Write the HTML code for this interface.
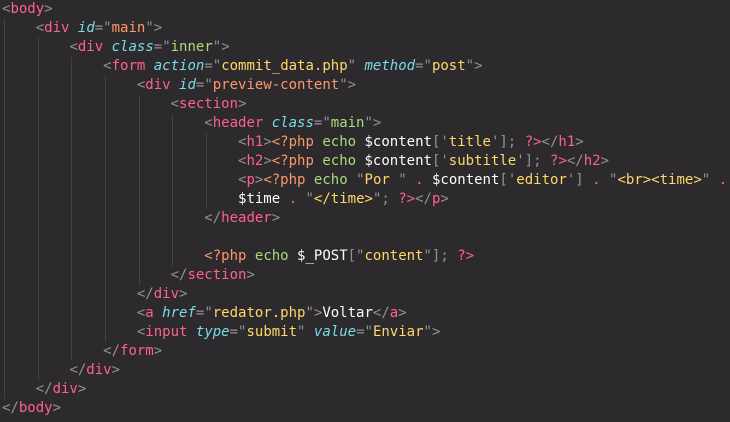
<!DOCTYPE html>
<html><head><meta charset="utf-8"><style>
html,body{margin:0;padding:0}
body{width:730px;height:422px;background:#2d2a2e;overflow:hidden;position:relative;font-family:"DejaVu Sans Mono","Liberation Mono",monospace;font-size:14px;color:#fcfcfa}
pre{margin:0;font:inherit;line-height:19px;position:absolute;top:0;left:2px;white-space:pre}
.g{position:absolute;width:1px;background:#454246}
.b{color:#939293}.t{color:#ff6188}.a{color:#78dce8;font-style:italic}
.o{color:#fc9867}.gr{color:#a9dc76}.y{color:#ffd866}.w{color:#fcfcfa}
</style></head><body>
<div class="g" style="left:4px;top:19px;height:380px"></div>
<div class="g" style="left:38px;top:38px;height:342px"></div>
<div class="g" style="left:71px;top:57px;height:304px"></div>
<div class="g" style="left:105px;top:76px;height:266px"></div>
<div class="g" style="left:139px;top:95px;height:190px"></div>
<div class="g" style="left:172px;top:114px;height:152px"></div>
<div class="g" style="left:206px;top:133px;height:76px"></div>
<pre><span class="b">&lt;</span><span class="t">body</span><span class="b">&gt;</span>
    <span class="b">&lt;</span><span class="t">div</span> <span class="a">id</span><span class="b">="</span><span class="o">main</span><span class="b">"&gt;</span>
        <span class="b">&lt;</span><span class="t">div</span> <span class="a">class</span><span class="b">="</span><span class="gr">inner</span><span class="b">"&gt;</span>
            <span class="b">&lt;</span><span class="t">form</span> <span class="a">action</span><span class="b">="</span><span class="y">commit_data.php</span><span class="b">"</span> <span class="a">method</span><span class="b">="</span><span class="y">post</span><span class="b">"&gt;</span>
                <span class="b">&lt;</span><span class="t">div</span> <span class="a">id</span><span class="b">="</span><span class="o">preview-content</span><span class="b">"&gt;</span>
                    <span class="b">&lt;</span><span class="t">section</span><span class="b">&gt;</span>
                        <span class="b">&lt;</span><span class="t">header</span> <span class="a">class</span><span class="b">="</span><span class="gr">main</span><span class="b">"&gt;</span>
                            <span class="b">&lt;</span><span class="t">h1</span><span class="b">&gt;</span><span class="o">&lt;?php</span> <span class="gr">echo</span> <span class="w">$content</span><span class="b">['</span><span class="y">title</span><span class="b">'];</span> <span class="t">?&gt;</span><span class="b">&lt;/</span><span class="t">h1</span><span class="b">&gt;</span>
                            <span class="b">&lt;</span><span class="t">h2</span><span class="b">&gt;</span><span class="o">&lt;?php</span> <span class="gr">echo</span> <span class="w">$content</span><span class="b">['</span><span class="y">subtitle</span><span class="b">'];</span> <span class="t">?&gt;</span><span class="b">&lt;/</span><span class="t">h2</span><span class="b">&gt;</span>
                            <span class="b">&lt;</span><span class="t">p</span><span class="b">&gt;</span><span class="o">&lt;?php</span> <span class="gr">echo</span> <span class="b">"</span><span class="y">Por </span><span class="b">"</span> <span class="t">.</span> <span class="w">$content</span><span class="b">['</span><span class="y">editor</span><span class="b">']</span> <span class="t">.</span> <span class="b">"</span><span class="y">&lt;br&gt;&lt;time&gt;</span><span class="b">"</span> <span class="t">.</span>
                            <span class="w">$time</span> <span class="t">.</span> <span class="b">"</span><span class="y">&lt;/time&gt;</span><span class="b">";</span> <span class="t">?&gt;</span><span class="b">&lt;/</span><span class="t">p</span><span class="b">&gt;</span>
                        <span class="b">&lt;/</span><span class="t">header</span><span class="b">&gt;</span>

                        <span class="o">&lt;?php</span> <span class="gr">echo</span> <span class="w">$_POST</span><span class="b">["</span><span class="y">content</span><span class="b">"];</span> <span class="t">?&gt;</span>
                    <span class="b">&lt;/</span><span class="t">section</span><span class="b">&gt;</span>
                <span class="b">&lt;/</span><span class="t">div</span><span class="b">&gt;</span>
                <span class="b">&lt;</span><span class="t">a</span> <span class="a">href</span><span class="b">="</span><span class="y">redator.php</span><span class="b">"&gt;</span><span class="w">Voltar</span><span class="b">&lt;/</span><span class="t">a</span><span class="b">&gt;</span>
                <span class="b">&lt;</span><span class="t">input</span> <span class="a">type</span><span class="b">="</span><span class="y">submit</span><span class="b">"</span> <span class="a">value</span><span class="b">="</span><span class="y">Enviar</span><span class="b">"&gt;</span>
            <span class="b">&lt;/</span><span class="t">form</span><span class="b">&gt;</span>
        <span class="b">&lt;/</span><span class="t">div</span><span class="b">&gt;</span>
    <span class="b">&lt;/</span><span class="t">div</span><span class="b">&gt;</span>
<span class="b">&lt;/</span><span class="t">body</span><span class="b">&gt;</span></pre>
</body></html>
